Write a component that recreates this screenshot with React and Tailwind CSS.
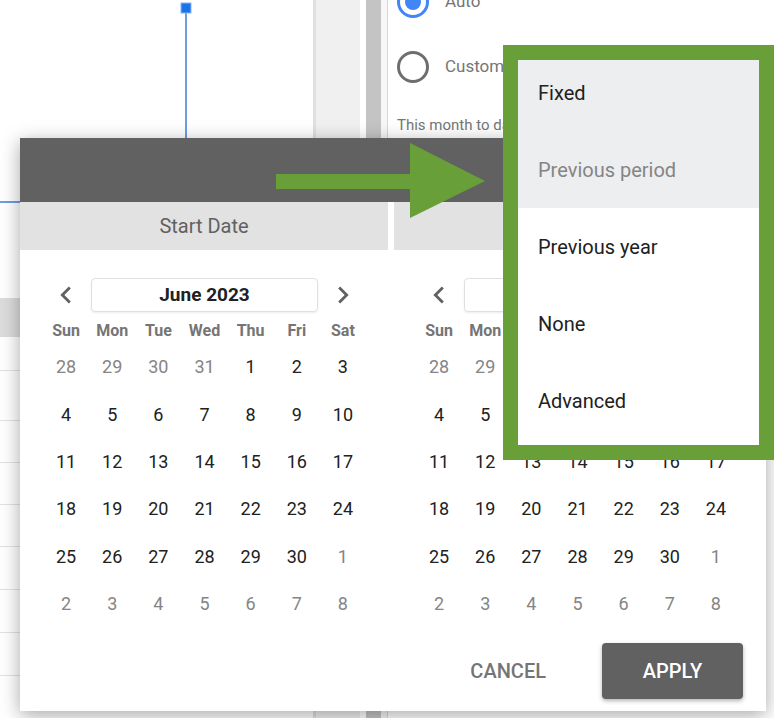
import { MdChevronLeft, MdChevronRight } from "react-icons/md";

const WEEK = ["Sun", "Mon", "Tue", "Wed", "Thu", "Fri", "Sat"];

const DAYS = [
  [28, 29, 30, 31, 1, 2, 3],
  [4, 5, 6, 7, 8, 9, 10],
  [11, 12, 13, 14, 15, 16, 17],
  [18, 19, 20, 21, 22, 23, 24],
  [25, 26, 27, 28, 29, 30, 1],
  [2, 3, 4, 5, 6, 7, 8],
];

const MENU = [
  { label: "Fixed", h: "h-[71px] pb-[5px]", active: true },
  { label: "Previous period", h: "h-[77px]", active: true, muted: true },
  { label: "Previous year", h: "h-[77px]" },
  { label: "None", h: "h-[77px]" },
  { label: "Advanced", h: "h-[77px]" },
];

const ROWS = ["h-[35px]", "h-[52px]", "h-[44px]", "h-[44px]", "h-[44px]", "h-[44px]", "h-[45px]", "h-[45px]"];

const Calendar = () => {
  return (
    <div className="w-[373px] pl-[23px] pr-[27px]">
      {/* Month navigation */}
      <div className="mt-[28px] h-[34px] flex items-center justify-between">
        <div className="w-[46px] flex justify-center text-[#616161]">
          <MdChevronLeft size={34} />
        </div>
        <div className="w-[227px] h-[34px] rounded border border-[#e0e0e0] shadow-[0_1px_2px_rgba(0,0,0,0.08)] flex items-center justify-center text-[19px] font-bold text-[#212121]">
          June 2023
        </div>
        <div className="w-[46px] flex justify-center text-[#616161]">
          <MdChevronRight size={34} />
        </div>
      </div>

      <div className="mt-[7px] h-[24px] grid grid-cols-7">
        {WEEK.map((d) => (
          <div key={d} className="flex items-center justify-center text-[16px] font-bold text-[#757575]">
            {d}
          </div>
        ))}
      </div>

      {DAYS.map((week, wi) => (
        <div key={wi} className="h-[47.4px] grid grid-cols-7">
          {week.map((day, di) => {
            const outside = (wi === 0 && day > 20) || (wi >= 4 && day < 10);
            return (
              <div
                key={di}
                className={`flex items-center justify-center text-[18px] ${
                  outside ? "text-[#858585]" : "text-[#212121]"
                }`}
              >
                {day}
              </div>
            );
          })}
        </div>
      ))}
    </div>
  );
};

export default function App() {
  return (
    <div
      className="relative w-[774px] h-[718px] overflow-hidden bg-white flex"
      style={{ fontFamily: "Roboto, 'Noto Sans', sans-serif" }}
    >
      {/* Report canvas behind the dialog */}
      <div className="w-[313px] h-full flex flex-col">
        <svg width="313" height="298" className="shrink-0">
          <line x1="186" y1="8" x2="186" y2="298" stroke="#3b7ddd" strokeWidth="1.5" />
          <rect x="181" y="3" width="10" height="10" fill="#1a73e8" stroke="#8ab4f8" strokeWidth="1" />
          <line x1="0" y1="202" x2="20" y2="202" stroke="#3b7ddd" strokeWidth="1.5" />
        </svg>
        <div className="h-[41px] bg-gradient-to-r from-[#dcdcdc] to-[#e6e6e6]" />
        {ROWS.map((h, i) => (
          <div key={i} className={`${h} border-b border-[#e2e2e2]`} />
        ))}
        <div className="h-[44px] flex items-center pl-[100px] gap-1 text-[16px] text-[#212121]">
          -9.3 9%
          <span className="w-[5px] h-[8px] bg-[#d93025] rounded-full" />
        </div>
      </div>
      <div className="w-[47px] h-full bg-[#f0f0f0] border-l-[3px] border-[#e0e0e0]" />
      <div className="w-[6px] h-full bg-white" />
      <div className="w-[15px] h-full bg-[#c4c4c4]" />
      <div className="w-[6px] h-full bg-[#f7f7f7]" />
      <div className="flex-1 h-full bg-white border-l border-[#d8d8d8] pl-[9px]">
        <div className="-mt-[14px] h-[32px] flex items-center gap-[16px]">
          <span className="w-[32px] h-[32px] rounded-full border-[3px] border-[#4285f4] flex items-center justify-center">
            <span className="w-[16px] h-[16px] rounded-full bg-[#4285f4]" />
          </span>
          <span className="text-[17px] text-[#757575]">Auto</span>
        </div>
        <div className="mt-[33px] h-[32px] flex items-center gap-[16px]">
          <span className="w-[32px] h-[32px] rounded-full border-[3px] border-[#6e6e6e]" />
          <span className="text-[17px] text-[#757575]">Custom</span>
        </div>
        <div className="mt-[32px] text-[15px] leading-[20px] text-[#757575] whitespace-nowrap">This month to date</div>
      </div>

      {/* Date range dialog */}
      <div className="absolute left-[20px] top-[138px] w-[746px] h-[573px] bg-white shadow-[0_4px_18px_rgba(0,0,0,0.35)] flex flex-col">
        <div className="h-[64px] bg-[#616161]" />
        <div className="h-[48px] flex">
          <div className="w-[368px] bg-[#e2e2e2] flex items-center justify-center text-[20px] text-[#616161]">
            Start Date
          </div>
          <div className="w-[6px]" />
          <div className="flex-1 bg-[#e2e2e2] flex items-center justify-center text-[20px] text-[#616161]">
            End Date
          </div>
        </div>
        <div className="flex">
          <Calendar />
          <Calendar />
        </div>
        <div className="mt-[16px] pr-[23px] flex items-center justify-end">
          <button className="h-[56px] px-[20px] mr-[36px] text-[20px] font-medium text-[#757575]">CANCEL</button>
          <button className="w-[141px] h-[56px] rounded bg-[#616161] shadow-[0_2px_4px_rgba(0,0,0,0.3)] text-[20px] font-medium text-white">
            APPLY
          </button>
        </div>
      </div>

      {/* Annotation arrow */}
      <svg className="absolute left-[276px] top-[143px]" width="210" height="76">
        <rect x="0" y="31" width="136" height="15" fill="#689f38" />
        <polygon points="134,0 209,38 134,75" fill="#689f38" />
      </svg>

      {/* Comparison menu, highlighted */}
      <div className="absolute left-[503px] top-[45px] w-[271px] h-[415px] border-[15px] border-[#689f38] bg-white">
        {MENU.map((item) => (
          <div
            key={item.label}
            className={`${item.h} flex items-center pl-[20px] text-[20px] ${
              item.active ? "bg-[#eceeef]" : ""
            } ${item.muted ? "text-[#858585]" : "text-[#212121]"}`}
          >
            {item.label}
          </div>
        ))}
      </div>
    </div>
  );
}
